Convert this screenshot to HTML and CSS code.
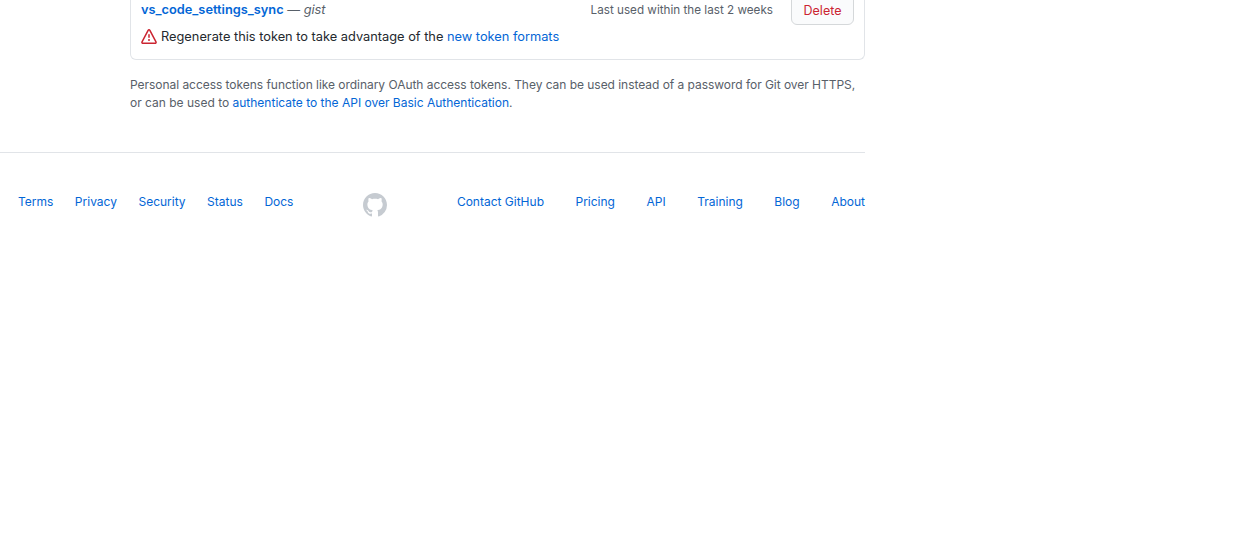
FILE: index.html
```html
<!DOCTYPE html>
<html lang="en">
<head>
  <meta charset="UTF-8" />
  <title>Personal access tokens</title>
  <link rel="stylesheet" href="styles.css">
</head>
<body>
  <div class="page">
    <div class="content">
      <div class="token-box">
        <div class="token-top">
          <div class="token-name"><a class="token-link" href="#">vs_code_settings_sync</a> — <em>gist</em></div>
          <div class="token-right">
            <span class="last-used">Last used within the last 2 weeks</span>
            <button class="btn-delete" type="button">Delete</button>
          </div>
        </div>
        <div class="token-warn">
          <svg class="warn-icon" viewBox="0 0 16 16" width="16" height="16"><path fill-rule="evenodd" d="M8.22 1.754a.25.25 0 00-.44 0L1.698 13.132a.25.25 0 00.22.368h12.164a.25.25 0 00.22-.368L8.22 1.754zm-1.763-.707c.659-1.234 2.427-1.234 3.086 0l6.082 11.378A1.75 1.75 0 0114.082 15H1.918a1.75 1.75 0 01-1.543-2.575L6.457 1.047zM9 11a1 1 0 11-2 0 1 1 0 012 0zm-.25-5.25a.75.75 0 00-1.5 0v2.5a.75.75 0 001.5 0v-2.5z"></path></svg>
          <span>Regenerate this token to take advantage of the <a href="#">new token formats</a></span>
        </div>
      </div>
      <p class="note"><span class="note-lead">Personal access tokens function like ordinary OAuth access tokens. They can be used instead of a password for Git over HTTPS,</span> or can be used to <a href="#">authenticate to the API over Basic Authentication</a>.</p>
    </div>

    <footer class="footer">
      <ul class="links links-left">
        <li><a href="#">Terms</a></li>
        <li><a href="#">Privacy</a></li>
        <li><a href="#">Security</a></li>
        <li><a href="#">Status</a></li>
        <li><a href="#">Docs</a></li>
      </ul>
      <svg class="mark" viewBox="0 0 16 16" width="24" height="24"><path fill-rule="evenodd" d="M8 0C3.58 0 0 3.58 0 8c0 3.54 2.29 6.53 5.47 7.59.4.07.55-.17.55-.38 0-.19-.01-.82-.01-1.49-2.01.37-2.53-.49-2.69-.94-.09-.23-.48-.94-.82-1.13-.28-.15-.68-.52-.01-.53.63-.01 1.08.58 1.23.82.72 1.21 1.87.87 2.33.66.07-.52.28-.87.51-1.07-1.78-.2-3.64-.89-3.64-3.95 0-.87.31-1.59.82-2.15-.08-.2-.36-1.02.08-2.12 0 0 .67-.21 2.2.82.64-.18 1.32-.27 2-.27.68 0 1.36.09 2 .27 1.53-1.04 2.2-.82 2.2-.82.44 1.1.16 1.92.08 2.12.51.56.82 1.27.82 2.15 0 3.07-1.87 3.75-3.65 3.95.29.25.54.73.54 1.48 0 1.07-.01 1.93-.01 2.2 0 .21.15.46.55.38A8.013 8.013 0 0016 8c0-4.42-3.58-8-8-8z"></path></svg>
      <ul class="links links-right">
        <li><a href="#">Contact GitHub</a></li>
        <li><a href="#">Pricing</a></li>
        <li><a href="#">API</a></li>
        <li><a href="#">Training</a></li>
        <li><a href="#">Blog</a></li>
        <li><a href="#">About</a></li>
      </ul>
    </footer>
  </div>
</body>
</html>
```

FILE: styles.css
```css
:root {
  --link: #0366d6;
  --muted: #586069;
  --text: #24292e;
  --border: #e1e4e8;
  --danger: #cb2431;
}

html, body {
  height: 100%;
}

body {
  margin: 0;
  background: #fff;
  color: var(--text);
  font-family: Inter, "Liberation Sans", sans-serif;
  font-size: 12px;
  overflow: hidden;
}

a {
  color: var(--link);
  text-decoration: none;
}

.page {
  width: 865px;
}

.content {
  padding-left: 130px;
}

.token-box {
  height: 60px;
  box-sizing: border-box;
  padding: 0 10px;
  border: 1px solid var(--border);
  border-top: none;
  border-radius: 0 0 6px 6px;
}

.token-top {
  display: flex;
  justify-content: space-between;
  height: 25px;
}

.token-name {
  font-size: 12.8px;
  line-height: 20px;
  color: var(--muted);
}

.token-link {
  font-weight: 600;
}

.token-right {
  display: flex;
  align-items: flex-end;
  gap: 18px;
}

.last-used {
  align-self: flex-start;
  line-height: 20px;
  color: var(--muted);
  font-size: 11.7px;
}

.btn-delete {
  width: 63px;
  height: 32px;
  padding: 3px 0 0;
  border: 1px solid #d5d8da;
  border-radius: 6px;
  background: #fafbfc;
  color: var(--danger);
  font-family: inherit;
  font-size: 12.5px;
}

.token-warn {
  display: flex;
  align-items: center;
  gap: 4px;
  margin-top: 4px;
  font-size: 12.8px;
  line-height: 16px;
  color: var(--text);
}

.warn-icon {
  fill: var(--danger);
}

.note {
  margin: 16px 0 0;
  line-height: 18px;
  color: var(--muted);
}

.note-lead {
  letter-spacing: -0.04px;
}

.footer {
  display: flex;
  justify-content: space-between;
  align-items: flex-start;
  margin-top: 40px;
  padding: 40px 0 0 18px;
  border-top: 1px solid var(--border);
}

.links {
  display: flex;
  margin: 0;
  padding: 0;
  list-style: none;
  line-height: 18px;
}

.links-left {
  gap: 21.5px;
}

.links-right {
  gap: 31.5px;
}

.mark {
  fill: #c6cbd1;
}
```
